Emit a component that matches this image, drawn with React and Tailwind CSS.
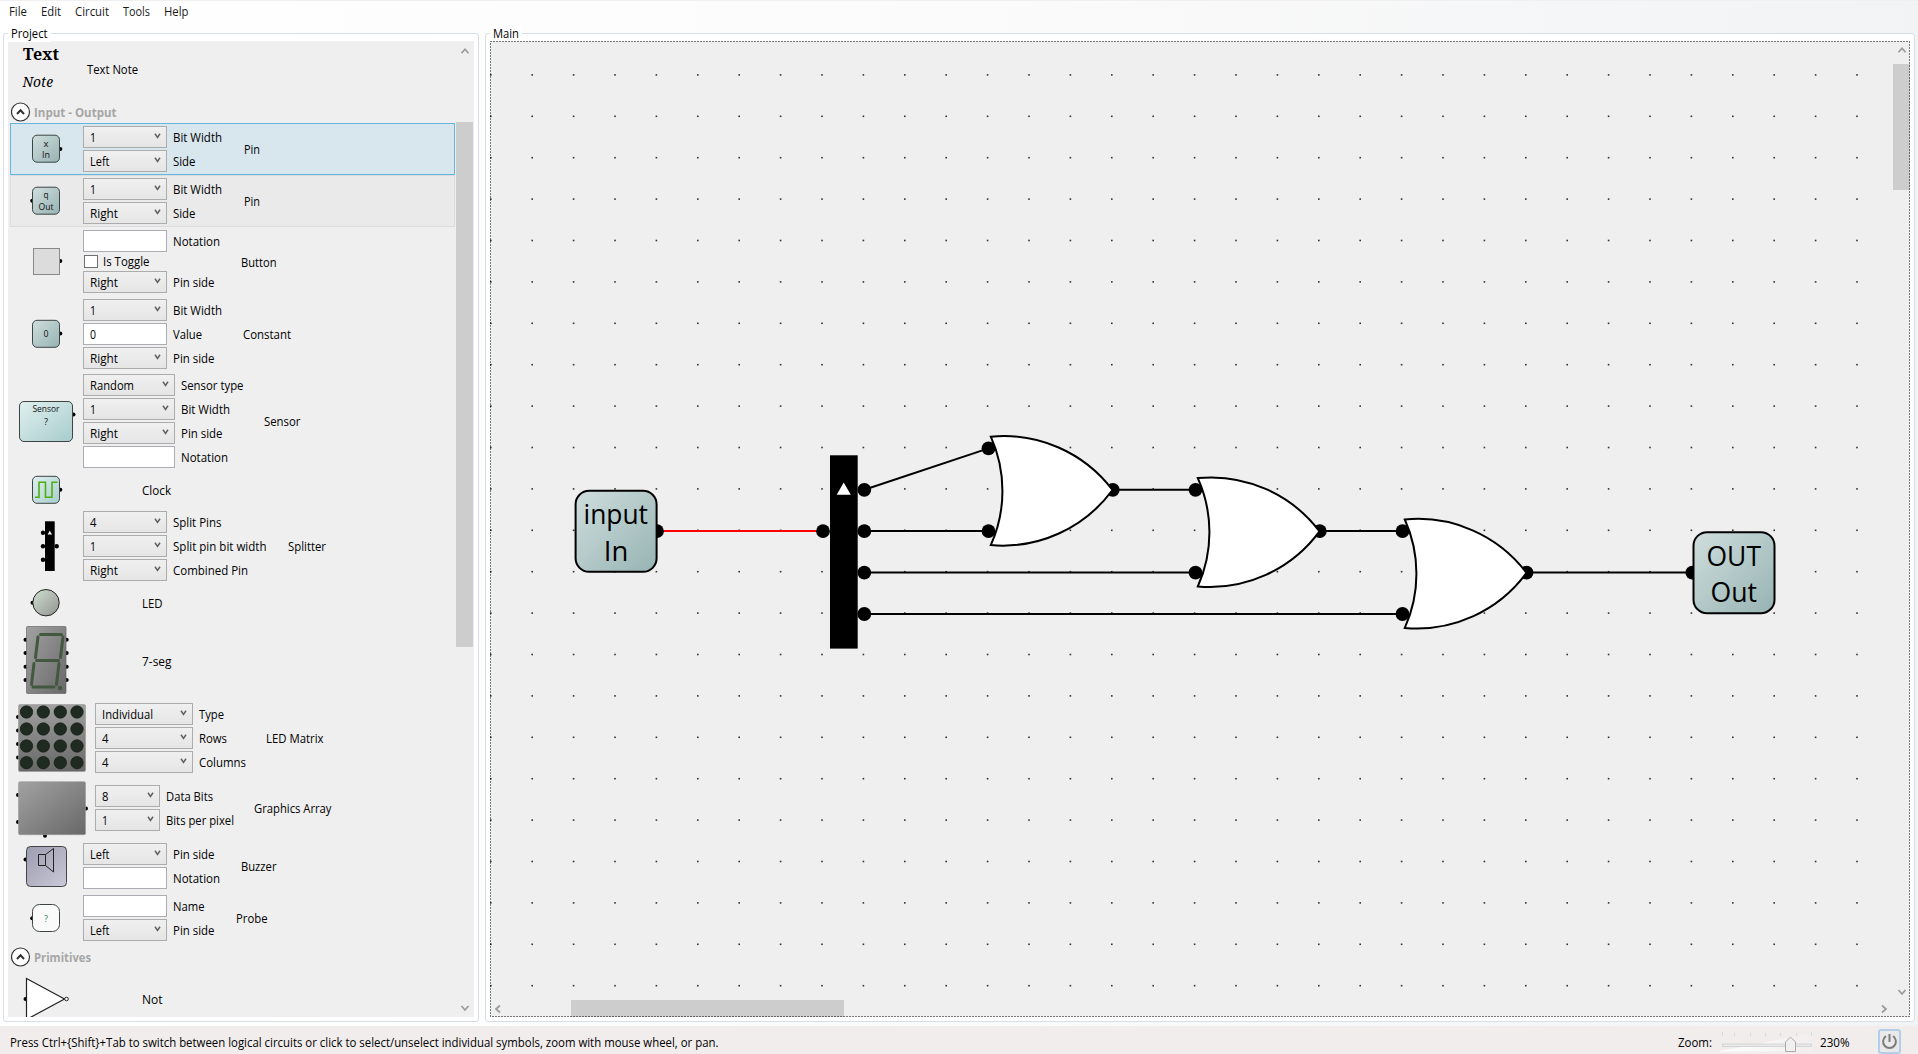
import React from "react";

const T = ({ children, w, className = "" }) => (
  <svg width={w} height="18" className={"block shrink-0 overflow-visible " + className}>
    <text x="0" y="14" textLength={w} lengthAdjust="spacingAndGlyphs" fill="currentColor">{children}</text>
  </svg>
);

const Chevron = ({ d, className = "" }) => (
  <svg width="12" height="12" viewBox="0 0 12 12" className={"shrink-0 " + className} fill="none" stroke="currentColor" strokeWidth="1.7">
    <path d={d} />
  </svg>
);
const UP = "M2.5 8.2 6 4.2 9.5 8.2";
const DOWN = "M2.5 4 6 8 9.5 4";

const WIDTHS = { "1": 6, "0": 6, "4": 6.5, "8": 6.5, Left: 19.5, Right: 28, Random: 44, Individual: 51 };

const Combo = ({ value }) => (
  <div className="flex h-[22px] items-center justify-between border border-[#acacac] bg-gradient-to-b from-[#f0f0f0] to-[#e5e5e5] pl-[5.5px] pr-[5.5px] text-black">
    <T w={WIDTHS[value]}>{value}</T>
    <svg width="7" height="6" viewBox="0 0 7 6" className="mb-[3px]" fill="none" stroke="#606060" strokeWidth="1.5">
      <path d="M1 .8 3.5 4.4 6 .8" />
    </svg>
  </div>
);

const Box = ({ value }) => (
  <div className="flex h-[22px] items-center border border-[#abadb3] bg-white pl-[5.5px]">
    {value && <T w={6}>{value}</T>}
  </div>
);

const Check = ({ label }) => (
  <div className="flex h-[15px] items-center gap-[5px] pl-px">
    <div className="h-[13px] w-[14px] border border-[#707070] bg-white" />
    <T w={46.5} className="-mt-[2px]">{label}</T>
  </div>
);

const Fields = ({ rows, w, labelW }) => (
  <div className="flex shrink-0 flex-col gap-[2px]">
    {rows.map(([kind, value, label, lw], i) => (
      <div key={i} className="flex items-center gap-[6px]">
        <div style={{ width: w }} className="shrink-0">
          {kind === "combo" && <Combo value={value} />}
          {kind === "box" && <Box value={value} />}
          {kind === "check" && <Check label={value} />}
        </div>
        <div style={{ width: labelW }} className="shrink-0">{label && <T w={lw}>{label}</T>}</div>
      </div>
    ))}
  </div>
);

const Row = ({ top, h, icon, iconW = 73, rows, w, labelW, name, nameW, className = "", nameClass = "" }) => (
  <div style={{ height: h }} className={"flex w-[445px] shrink-0 items-center " + className}>
    <div style={{ width: iconW, height: h }} className="shrink-0">
      <svg width={iconW} height={h} viewBox={`10 ${top} ${iconW} ${h}`} className="block overflow-visible">{icon}</svg>
    </div>
    {rows && <Fields rows={rows} w={w} labelW={labelW} />}
    <div className={nameClass}><T w={nameW}>{name}</T></div>
  </div>
);

const Header = ({ children, w, className = "" }) => (
  <div className={"flex shrink-0 items-center gap-[3px] pl-px font-bold text-[#a6a6a6] " + className}>
    <svg width="20" height="20" viewBox="0 0 20 20" fill="none" stroke="#333">
      <circle cx="9.5" cy="10" r="9" fill="#fff" strokeWidth="1.2" />
      <path d="M6 12 9.5 8.2 13 12" strokeWidth="2" />
    </svg>
    <T w={w}>{children}</T>
  </div>
);

const Pins = ({ pts, r = 2 }) => pts.map(([x, y], i) => <circle key={i} cx={x} cy={y} r={r} fill="#000" />);
const Mid = ({ x = 46, y, w, children, fill = "#111", size = 9 }) => (
  <text x={x - w / 2} y={y} fontSize={size} textLength={w} lengthAdjust="spacingAndGlyphs" fill={fill}>{children}</text>
);
const Chip = ({ y, fill = "url(#pin)", rx = 4.5 }) => (
  <rect x="32.5" y={y} width="27" height="27" rx={rx} fill={fill} stroke="#3c4444" strokeWidth="1" />
);

const combo = (v, l, lw) => ["combo", v, l, lw];

const Gate = ({ x, y }) => (
  <path
    transform={`translate(${x} ${y})`}
    d="M990.8 436.7A136.2 136.2 0 0 1 1112.5 490A136.2 136.2 0 0 1 990.8 545.1A132 132 0 0 0 990.8 436.7Z"
    fill="#fff" stroke="#000" strokeWidth="2"
  />
);

const Wire = ({ d, color = "#000" }) => <path d={d} stroke={color} strokeWidth="2" fill="none" />;

const Label = ({ x, y, w, children }) => (
  <text x={x} y={y} fontSize="27" textLength={w} lengthAdjust="spacingAndGlyphs" fill="#000">{children}</text>
);

const dots = [];
for (let r = 0; r < 23; r++) for (let c = 0; c < 34; c++) dots.push([490.8 + c * 41.4, 74.9 + r * 41.4]);

const Circuit = () => (
  <svg width="1420" height="976" viewBox="490 41 1420 976" className="block">
    {dots.map(([x, y], i) => <rect key={i} x={x - 0.8} y={y - 0.8} width="1.6" height="1.6" fill="#333" />)}
    <Wire d="M657 531H823" color="#f00" />
    <Wire d="M864.3 489.8 988.5 448.4" />
    <Wire d="M864.3 531H988.5" />
    <Wire d="M864.3 572.6H1195.5" />
    <Wire d="M864.3 614H1402.5" />
    <Wire d="M1113 489.8H1195.5" />
    <Wire d="M1320 531H1402.5" />
    <Wire d="M1527 572.6H1692" />
    <Pins r={6.9} pts={[[657, 531.2], [823, 531.2], [864.3, 489.8], [864.3, 531.2], [864.3, 572.6], [864.3, 614],
      [988.5, 448.4], [988.5, 531.2], [1112.8, 489.8], [1195.5, 489.8], [1195.5, 572.6], [1319.8, 531.2],
      [1402.5, 531.2], [1402.5, 614], [1526.6, 572.6], [1692.3, 572.6]]} />
    <rect x="830" y="455.3" width="27.7" height="193.3" fill="#000" />
    <path d="M843.7 482.5 850.8 494.7H836.7Z" fill="#fff" />
    <Gate x={0} y={0} />
    <Gate x={207} y={41.4} />
    <Gate x={414} y={82.8} />
    <rect x="575.6" y="490.8" width="81" height="81" rx="13.5" fill="url(#pin)" stroke="#000" strokeWidth="2" />
    <rect x="1693.5" y="532.2" width="81" height="81" rx="13.5" fill="url(#pin)" stroke="#000" strokeWidth="2" />
    <Label x={583.5} y={523.7} w={64.5}>input</Label>
    <Label x={603.8} y={560.7} w={24.5}>In</Label>
    <Label x={1706.5} y={565.5} w={54.5}>OUT</Label>
    <Label x={1710.5} y={601.7} w={46.5}>Out</Label>
  </svg>
);

const Legend = ({ children, w }) => (
  <div className="absolute left-[4px] top-[-10px] bg-white px-[3px]"><T w={w}>{children}</T></div>
);

const ledXs = [26.5, 43.3, 60.3, 77];
const ledYs = [712, 729, 746, 762.7];

export default function App() {
  return (
    <div className="flex h-[1054px] w-[1918px] flex-col overflow-hidden border-t border-[#f0f0f0] bg-white font-['Open_Sans','Noto_Sans',sans-serif] text-[12px] leading-[18px] text-black">
      <svg width="0" height="0" className="absolute">
        <defs>
          <linearGradient id="pin" x1="0" y1="0" x2="1" y2="1"><stop offset="0" stopColor="#cfdedd" /><stop offset="1" stopColor="#97b3b3" /></linearGradient>
          <linearGradient id="sensor" x1="0" y1="0" x2="1" y2="1"><stop offset="0" stopColor="#e0f0f0" /><stop offset="1" stopColor="#a8cccc" /></linearGradient>
          <linearGradient id="led" x1="0" y1="0" x2="1" y2="1"><stop offset="0" stopColor="#cfe0cf" /><stop offset="1" stopColor="#929292" /></linearGradient>
          <linearGradient id="dark" x1="0" y1="0" x2="1" y2="1"><stop offset="0" stopColor="#a2a2a2" /><stop offset="1" stopColor="#686868" /></linearGradient>
          <linearGradient id="darkv" x1="0" y1="0" x2="0" y2="1"><stop offset="0" stopColor="#a0a0a0" /><stop offset="1" stopColor="#686868" /></linearGradient>
          <linearGradient id="buzz" x1="0" y1="0" x2="1" y2="1"><stop offset="0" stopColor="#9c9caf" /><stop offset="1" stopColor="#c9c9d8" /></linearGradient>
          <linearGradient id="wedge" x1="0" y1="0" x2="1" y2="0"><stop offset="0" stopColor="#fff" /><stop offset="1" stopColor="#f1eeed" /></linearGradient>
        </defs>
      </svg>

      <div className="flex h-[1025px] shrink-0 flex-col bg-gradient-to-r from-white via-[#fbfbfb] to-[#f2f3f5]">
        <nav className="flex h-[32px] shrink-0 items-start gap-[14px] pl-[8.5px] pt-px text-[#1a1a1a]">
          <T w={18}>File</T>
          <T w={20}>Edit</T>
          <T w={34}>Circuit</T>
          <T w={27}>Tools</T>
          <T w={24.5}>Help</T>
        </nav>

        <div className="flex shrink-0 gap-[6px] pl-[3px]">
          <section className="relative h-[989px] w-[476px] shrink-0 rounded-[3px] border border-[#d5dfe5] bg-white pl-[4px] pt-[7px]">
            <Legend w={36.5}>Project</Legend>
            <div className="flex h-[976px] w-[466px] overflow-hidden bg-[#efefef]">
              <div className="flex w-[448px] shrink-0 flex-col pl-[2px]">
                <Row top={41} h={58} iconW={77} name="Text Note" nameW={51} nameClass="pb-[3px]"
                  icon={<g fontFamily="'Noto Serif','Liberation Serif',serif">
                    <text x="23" y="60" fontSize="16" fontWeight="bold" textLength="36" lengthAdjust="spacingAndGlyphs">Text</text>
                    <text x="22.5" y="87" fontSize="14" fontStyle="italic" textLength="30.5" lengthAdjust="spacingAndGlyphs">Note</text>
                  </g>} />
                <Header w={82.5} className="h-[24px] pt-[2px]">Input - Output</Header>

                <Row top={123} h={52} w={84} labelW={70.5} name="Pin" nameW={16} className="bg-[#d8e6ed] outline outline-1 -outline-offset-1 outline-[#66b5de]"
                  icon={<><Pins pts={[[60.3, 149]]} /><Chip y={135.2} /><Mid y={146.5} w={5}>x</Mid><Mid y={158} w={8}>In</Mid></>}
                  rows={[combo("1", "Bit Width", 49), combo("Left", "Side", 22.5)]} />
                <Row top={175} h={52} w={84} labelW={70.5} name="Pin" nameW={16} className="bg-[#eaeaea] outline outline-1 -outline-offset-1 outline-[#dcdcdc]"
                  icon={<><Pins pts={[[32.2, 200.7]]} /><Chip y={187.2} /><Mid y={198} w={5}>q</Mid><Mid y={210} w={15}>Out</Mid></>}
                  rows={[combo("1", "Bit Width", 49), combo("Right", "Side", 22.5)]} />
                <Row top={227} h={69} w={84} labelW={68} name="Button" nameW={35.5}
                  icon={<><Pins pts={[[60.3, 261]]} /><rect x="33.5" y="248.5" width="26" height="26" fill="#dcdcdc" stroke="#8a8a8a" /></>}
                  rows={[["box", "", "Notation", 47], ["check", "Is Toggle"], combo("Right", "Pin side", 41.5)]} />
                <Row top={296} h={76} w={84} labelW={70} name="Constant" nameW={48}
                  icon={<><Pins pts={[[60.3, 333.5]]} /><Chip y={320.3} /><Mid y={336.8} w={5}>0</Mid></>}
                  rows={[combo("1", "Bit Width", 49), ["box", "0", "Value", 29], combo("Right", "Pin side", 41.5)]} />
                <Row top={372} h={98} w={92} labelW={82.5} name="Sensor" nameW={36.5}
                  icon={<><Pins pts={[[73.5, 414.5]]} /><rect x="19.5" y="401.5" width="53" height="40" rx="4.5" fill="url(#sensor)" stroke="#3c4444" /><Mid y={411.8} w={27}>Sensor</Mid><Mid y={424.8} w={4}>?</Mid></>}
                  rows={[combo("Random", "Sensor type", 62.5), combo("1", "Bit Width", 49), combo("Right", "Pin side", 41.5), ["box", "", "Notation", 47]]} />
                <Row top={470} h={38} iconW={132} name="Clock" nameW={29} nameClass="pt-[2px]"
                  icon={<><Pins pts={[[60.3, 489.8]]} /><Chip y={476.3} fill="url(#sensor)" /><path d="M35 497.3H39V482.3H45.5V497.3H52V482.3H57.5" stroke="#4fae10" strokeWidth="1.6" fill="none" /></>} />
                <Row top={508} h={76} w={84} labelW={115} name="Splitter" nameW={38}
                  icon={<><Pins pts={[[43, 532.8], [43, 546.3], [43, 559.8], [56.7, 546.3]]} r={2.2} /><rect x="45" y="521.3" width="9.7" height="49.7" /><path d="M49.8 530.7 52 534.5H47.6Z" fill="#fff" /></>}
                  rows={[combo("4", "Split Pins", 48.5), combo("1", "Split pin bit width", 93.5), combo("Right", "Combined Pin", 75)]} />
                <Row top={584} h={38} iconW={132} name="LED" nameW={20.5}
                  icon={<><Pins pts={[[32.5, 602.7]]} /><circle cx="46" cy="602.7" r="13.2" fill="url(#led)" stroke="#222" /></>} />
                <Row top={622} h={78} iconW={132} name="7-seg" nameW={29.5}
                  icon={<><Pins pts={[639.7, 653, 666.7, 680].flatMap((y) => [[25.5, y], [66.7, y]])} />
                    <rect x="26.5" y="626.5" width="39.5" height="67" rx="1" fill="url(#dark)" stroke="#666" strokeWidth=".7" />
                    <g stroke="#42583f" strokeWidth="3" strokeLinecap="round">
                      <path d="M40.5 634.5H61.5M36.5 660.5H58.5M33 687H54M38 637 35.5 657.5M63 637 60.5 657.5M34 663.5 31.5 684.5M59 663.5 56.5 684.5" />
                    </g>
                    <circle cx="60" cy="688" r="2.3" fill="#42583f" /></>} />
                <Row top={700} h={76} iconW={85} w={98} labelW={67} name="LED Matrix" nameW={57.5}
                  icon={<><Pins pts={[[18, 717], [18, 730.5], [18, 744], [18, 757.5]]} />
                    <rect x="18.5" y="704.5" width="67" height="67" rx="1.5" fill="url(#darkv)" stroke="#999" strokeWidth=".6" />
                    {ledYs.flatMap((y) => ledXs.map((x) => <circle key={x + "-" + y} cx={x} cy={y} r="6.2" fill="#1f2b20" stroke="#111a11" strokeWidth=".7" />))}</>}
                  rows={[combo("Individual", "Type", 25), combo("4", "Rows", 28), combo("4", "Columns", 47)]} />
                <Row top={776} h={64} iconW={85} w={65} labelW={88} name="Graphics Array" nameW={77.5}
                  icon={<><Pins pts={[[18, 795], [18, 822], [86, 808.5], [45, 835.7]]} /><rect x="18.5" y="781.7" width="67" height="53" rx="1.5" fill="url(#dark)" stroke="#999" strokeWidth=".6" /></>}
                  rows={[combo("8", "Data Bits", 47), combo("1", "Bits per pixel", 68)]} />
                <Row top={840} h={52} w={84} labelW={68} name="Buzzer" nameW={35.5}
                  icon={<><Pins pts={[[25.5, 859.5]]} /><rect x="26.5" y="846.5" width="40" height="40" rx="4" fill="url(#buzz)" stroke="#444" />
                    <path d="M38.5 854.5H45.5V865.5H38.5ZM45.5 854.5 53.5 848.5V872L45.5 865.5" fill="none" stroke="#222" strokeWidth="1" /></>}
                  rows={[combo("Left", "Pin side", 41.5), ["box", "", "Notation", 47]]} />
                <Row top={892} h={52} w={84} labelW={62.5} name="Probe" nameW={31.5}
                  icon={<><Pins pts={[[32.2, 918.3]]} /><Chip y={904.5} fill="#fafafa" rx={7} /><Mid y={921.5} w={4} fill="#2c8c4c">?</Mid></>}
                  rows={[["box", "", "Name", 31.5], combo("Left", "Pin side", 41.5)]} />
                <Header w={57} className="h-[26px]">Primitives</Header>
                <Row top={970} h={58} iconW={132} name="Not" nameW={20.5}
                  icon={<><Pins pts={[[25.5, 999]]} /><path d="M26.5 978.5 64.5 999 26.5 1019.5Z" fill="#fff" stroke="#222" strokeWidth="1.2" /><circle cx="66.5" cy="999" r="1.8" fill="#fff" stroke="#222" /></>} />
              </div>
              <div className="flex w-[17px] shrink-0 flex-col items-center pb-[3px] pt-[4px] text-[#9a9a9a]">
                <Chevron d={UP} />
                <div className="mt-[65px] h-[525px] w-[17px] bg-[#cdcdcd]" />
                <Chevron d={DOWN} className="mt-auto" />
              </div>
            </div>
          </section>

          <section className="relative h-[989px] w-[1430px] shrink-0 rounded-[3px] border border-[#d5dfe5] bg-white pl-[4px] pt-[7px]">
            <Legend w={26}>Main</Legend>
            <div className="relative h-[976px] w-[1420px] bg-[#efefef]">
              <Circuit />
              <div className="absolute right-0 top-0 flex h-[959px] w-[17px] flex-col items-center pb-[2px] pt-[3px] text-[#9a9a9a]">
                <Chevron d={UP} />
                <div className="mt-[8px] h-[126px] w-[17px] bg-[#cdcdcd]" />
                <Chevron d={DOWN} className="mt-auto" />
              </div>
              <div className="absolute bottom-0 left-0 flex h-[17px] w-[1403px] items-center pl-[2px] pr-[3px] text-[#9a9a9a]">
                <Chevron d="M8 2.5 4 6 8 9.5" />
                <div className="ml-[67px] h-[17px] w-[273px] bg-[#cdcdcd]" />
                <Chevron d="M4 2.5 8 6 4 9.5" className="ml-auto" />
              </div>
              <svg width="1420" height="976" className="absolute left-0 top-0">
                <rect x=".5" y=".5" width="1419" height="975" fill="none" stroke="#000" strokeDasharray="1 2" />
              </svg>
            </div>
          </section>
        </div>
      </div>

      <footer className="flex h-[28px] shrink-0 items-center bg-[#f1edec] pl-[9.5px]">
        <div className="pt-[4px]">
          <T w={708.5}>Press Ctrl+{"{Shift}"}+Tab to switch between logical circuits or click to select/unselect individual symbols, zoom with mouse wheel, or pan.</T>
        </div>
        <div className="ml-[960px] pt-[4px]"><T w={34}>Zoom:</T></div>
        <svg width="103" height="28" viewBox="1714 1026 103 28" className="ml-[2px]">
          <path d="M1718 1051.5 1813 1033V1051.5Z" fill="url(#wedge)" />
          <path d="M1722.5 1032V1036M1734.5 1033V1036M1750.5 1033V1036M1765.5 1033V1036M1780.5 1033V1036M1796.5 1033V1036M1811.5 1032V1036" stroke="#d9d9d9" />
          <rect x="1722.5" y="1044" width="89" height="2.5" fill="#e7eaea" stroke="#d0d0d0" strokeWidth=".8" />
          <path d="M1785.5 1051.5V1042L1790.5 1037 1795.5 1042V1051.5Z" fill="#f0f0f0" stroke="#a9a9a9" />
        </svg>
        <div className="ml-[3px] pt-[4px]"><T w={29.5}>230%</T></div>
        <div className="ml-[28px] flex h-[25px] w-[23px] items-center justify-center self-end rounded-[3px] border-2 border-[#b5cee8] bg-[#e9e9ea]">
          <svg width="17" height="17" viewBox="0 0 17 17" fill="none" stroke="#7c7c7c" strokeWidth="2">
            <path d="M5 3.2A6.4 6.4 0 1 0 12 3.2M8.5 1V9" />
          </svg>
        </div>
      </footer>
    </div>
  );
}
